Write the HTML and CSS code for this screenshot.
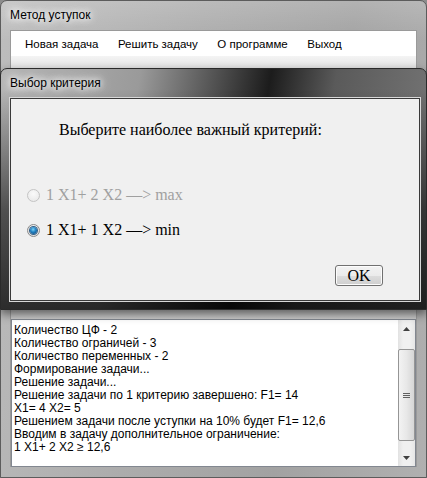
FILE: index.html
```html
<!DOCTYPE html>
<html lang="ru">
<head>
  <meta charset="UTF-8" />
  <title>Метод уступок</title>
  <link rel="stylesheet" href="styles.css">
</head>
<body>
  <div class="window">
    <div class="caption">Метод уступок</div>
    <ul class="menubar">
      <li>Новая задача</li>
      <li>Решить задачу</li>
      <li>О программе</li>
      <li>Выход</li>
    </ul>
    <div class="client">
      <div class="log">
        <div class="log-text">
          <div>Количество ЦФ - 2</div>
          <div>Количество ограничей - 3</div>
          <div>Количество переменных - 2</div>
          <div>Формирование задачи...</div>
          <div>Решение задачи...</div>
          <div>Решение задачи по 1 критерию завершено: F1= 14</div>
          <div>X1= 4 X2= 5</div>
          <div>Решением задачи после уступки на 10% будет F1= 12,6</div>
          <div>Вводим в задачу дополнительное ограничение:</div>
          <div>1 X1+ 2 X2 ≥ 12,6</div>
        </div>
        <div class="scrollbar">
          <div class="sb-btn">
            <svg width="7" height="4" viewBox="0 0 7 4"><path d="M3.5 0 L7 4 L0 4 Z" fill="#404040"/></svg>
          </div>
          <div class="sb-track">
            <div class="sb-thumb">
              <svg width="7" height="7" viewBox="0 0 7 7"><path d="M0 1.5h7M0 3.5h7M0 5.5h7" stroke="#606060" stroke-width="1"/></svg>
            </div>
          </div>
          <div class="sb-btn">
            <svg width="7" height="4" viewBox="0 0 7 4"><path d="M0 0 L7 0 L3.5 4 Z" fill="#404040"/></svg>
          </div>
        </div>
      </div>
    </div>
  </div>

  <div class="dialog">
    <div class="caption dialog-caption">Выбор критерия</div>
    <div class="dialog-client">
      <div class="question">Выберите наиболее важный критерий:</div>
      <label class="radio disabled"><span class="dot"></span>1 X1+ 2 X2 —&gt; max</label>
      <label class="radio checked"><span class="dot"></span>1 X1+ 1 X2 —&gt; min</label>
      <div class="buttons">
        <button class="ok">OK</button>
      </div>
    </div>
  </div>
</body>
</html>
```

FILE: styles.css
```css
* {
  box-sizing: border-box;
}
body {
  margin: 0;
  width: 427px;
  height: 478px;
  overflow: hidden;
  position: relative;
  background: #8c8c8c;
  font-family: "Liberation Sans", Arial, sans-serif;
}

/* главное окно */
.window {
  width: 427px;
  height: 478px;
  display: flex;
  flex-direction: column;
  padding: 0 9px 10px 9px;
  border: 1px solid #5c5c5c;
  border-radius: 7px 7px 0 0;
  background:
    linear-gradient(to bottom, rgba(255,255,255,0.18), rgba(255,255,255,0) 40px),
    linear-gradient(100deg, #bdbdbd 0%, #acacac 40%, #a2a2a2 70%, #b0b0b0 100%);
}
.caption {
  height: 29px;
  line-height: 29px;
  font-size: 12px;
  color: #000;
  text-shadow: 0 0 6px #fff, 0 0 10px #fff, 0 0 14px rgba(255,255,255,0.8);
}
.menubar {
  list-style: none;
  margin: 0;
  padding: 0 0 0 4px;
  height: 26px;
  display: flex;
  align-items: center;
  background: #fff;
  border-top: 1px solid #9a9a9a;
  border-left: 1px solid #9a9a9a;
  border-right: 1px solid #9a9a9a;
}
.menubar li {
  font-size: 11.5px;
  padding: 0 9.5px 0 10px;
  color: #000;
}
.client {
  flex: 1;
  display: flex;
  flex-direction: column;
  justify-content: flex-end;
  background: linear-gradient(to bottom, #f4f4f4 0, #e4e4e4 12px, #b9b9b9 250px, #c9c9c9 263px);
  border-left: 1px solid #9a9a9a;
  border-right: 1px solid #9a9a9a;
}
.log {
  height: 148px;
  display: flex;
  background: #fff;
  border: 1px solid #828790;
}
.log-text {
  flex: 1;
  padding: 4px 2px;
  font-size: 12px;
  line-height: 13px;
  color: #000;
  white-space: nowrap;
  overflow: hidden;
}
.scrollbar {
  width: 17px;
  display: flex;
  flex-direction: column;
  background: linear-gradient(to right, #e2e2e2, #f0f0f0 30%, #f0f0f0 70%, #e6e6e6);
}
.sb-btn {
  height: 17px;
  display: flex;
  align-items: center;
  justify-content: center;
}
.sb-track {
  flex: 1;
  padding: 12px 0 8px 0;
  display: flex;
}
.sb-thumb {
  flex: 1;
  display: flex;
  align-items: center;
  justify-content: center;
  border: 1px solid #959595;
  border-radius: 2px;
  background: linear-gradient(to right, #f3f3f3, #e8e8e8 50%, #d6d6d6);
}

/* диалог поверх */
.dialog {
  position: absolute;
  left: 0;
  top: 68px;
  width: 427px;
  height: 242px;
  display: flex;
  flex-direction: column;
  padding: 0 6px 8px 9px;
  border: 1px solid #2a2a2a;
  border-radius: 7px 7px 0 0;
  box-shadow: 0 4px 10px rgba(0,0,0,0.5);
  background:
    linear-gradient(to bottom, rgba(0,0,0,0) 20px, rgba(0,0,0,0.55) 140px, rgba(0,0,0,0.75) 242px),
    linear-gradient(100deg, #b6b6b6 0%, #9a9a9a 30%, #4a4a4a 48%, #1c1c1c 58%, #5a5a5a 72%, #7a7a7a 100%);
}
.dialog-client {
  flex: 1;
  display: flex;
  flex-direction: column;
  background: #f0f0f0;
  border: 1px solid #3a3a3a;
  box-shadow: 0 0 0 1px #d8d8d8;
  padding: 0 36px 0 16px;
  font-family: "Liberation Serif", "Times New Roman", serif;
  font-size: 16px;
}
.question {
  margin: 21px 0 0 32px;
  line-height: 20px;
  color: #000;
}
.radio {
  display: flex;
  align-items: center;
  gap: 6px;
  height: 20px;
  line-height: 20px;
  color: #000;
}
.radio.disabled {
  margin-top: 45px;
  color: #a0a0a0;
}
.radio.checked {
  margin-top: 15px;
}
.dot {
  width: 13px;
  height: 13px;
  border-radius: 50%;
  border: 1px solid #8a8a8a;
  background: radial-gradient(circle at 50% 35%, #fdfdfd, #d8d8d8);
  display: flex;
  align-items: center;
  justify-content: center;
}
.disabled .dot {
  border-color: #c4c4c4;
  background: radial-gradient(circle at 50% 35%, #fafafa, #e6e6e6);
}
.checked .dot::after {
  content: "";
  width: 7px;
  height: 7px;
  border-radius: 50%;
  background: radial-gradient(circle at 45% 35%, #7fd4f8 0, #1f7fc0 45%, #0a3f73 100%);
  box-shadow: 0 0 0 1px #335f86;
}
.buttons {
  margin-top: 25px;
  display: flex;
  justify-content: flex-end;
}
.ok {
  width: 48px;
  height: 21px;
  padding: 0;
  border: 1px solid #707070;
  border-radius: 3px;
  background: linear-gradient(to bottom, #f2f2f2 0, #ebebeb 50%, #dddddd 51%, #cfcfcf 100%);
  box-shadow: inset 0 0 0 1px #fcfcfc;
  font-family: "Liberation Serif", "Times New Roman", serif;
  font-size: 16px;
  color: #000;
}
```
